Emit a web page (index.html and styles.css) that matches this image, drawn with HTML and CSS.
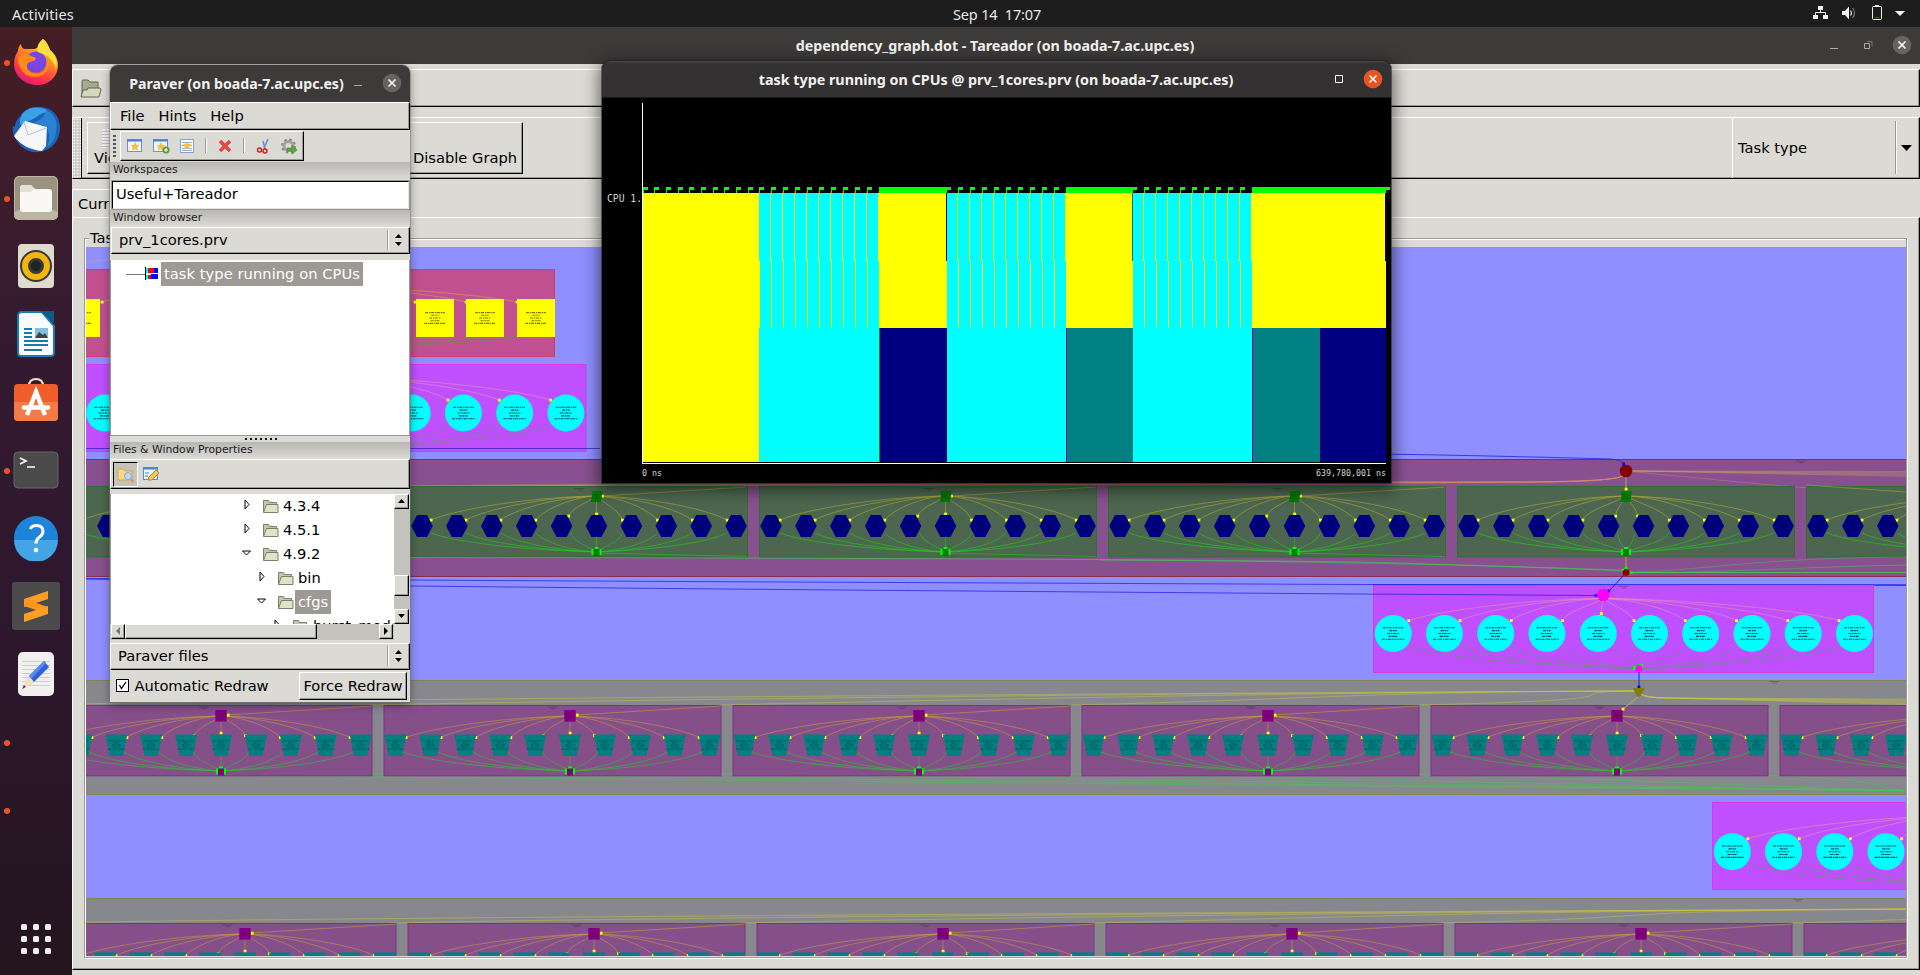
FILE: index.html
```html
<!DOCTYPE html>
<html lang="en">
<head>
<meta charset="utf-8">
<title>Desktop</title>
<link rel="stylesheet" href="styles.css">
</head>
<body>
<header class="topbar">
  <span class="activities">Activities</span>
  <span class="clock">Sep 14&nbsp; 17:07</span>
  <svg class="tray" width="110" height="27" viewBox="1810 0 110 27">
    <g fill="#f2f2f2"><rect x="1818" y="6" width="5" height="4"/><rect x="1813" y="15" width="5" height="4"/><rect x="1823" y="15" width="5" height="4"/></g>
    <path d="M1820.500 10V13M1815.500 15V12.500H1825.500V15" fill="none" stroke="#f2f2f2"/>
    <path d="M1842 11h3l4-4.500v13l-4-4.500h-3z" fill="#f2f2f2"/>
    <path d="M1850.500 10.500q2 2.500 0 5" fill="none" stroke="#ddd" stroke-width="1.200"/><path d="M1852.500 8q4 5 0 10" fill="none" stroke="#777" stroke-width="1.200"/>
    <rect x="1872.500" y="6.500" width="9" height="13" rx="1" fill="none" stroke="#f2f2f2"/><path d="M1875 5.500h4" stroke="#f2f2f2"/><path d="M1874 17.500h6" stroke="#c00"/>
    <path d="M1895 11h10l-5 5z" fill="#f2f2f2"/>
  </svg>
</header>
<div class="desktop">
  <nav class="dock">
    <div class="app running"><svg width="48" height="48" viewBox="0 0 48 48">
      <defs><linearGradient id="ff" x1="0.8" y1="0" x2="0.3" y2="1"><stop offset="0" stop-color="#fff44f"/><stop offset=".35" stop-color="#ff9a1f"/><stop offset=".7" stop-color="#ff4040"/><stop offset="1" stop-color="#e3157a"/></linearGradient><radialGradient id="fp"><stop offset="0" stop-color="#8a3ff0"/><stop offset="1" stop-color="#6a4bd8"/></radialGradient></defs>
      <path d="M31 1c4 3 6 8 7 11 5 4 8 9 8 15 0 12-9 20-21 20S2 38 2 26c0-6 2-10 4-13 0-3 1-5 3-7 0 3 2 5 4 5h9c2-1 4-1 5-2 0-3 2-6 4-8z" fill="url(#ff)"/>
      <circle cx="24" cy="24" r="10.500" fill="url(#fp)"/>
      <path d="M6 19c4-4 10-3 13-1l5 2c-1 4-6 3-8 5-3 4 0 9 5 10 8 2 14-3 14-10 0-3-1-5-2-6 5 3 5 11 0 16-6 6-17 5-22-1-3-5-6-10-5-15z" fill="#ff8c1a"/>
      <path d="M31 1c4 3 6 8 7 11 6 5 8 12 6 19-2-7-5-10-8-12-3-3-6-3-10-5-2-5 1-10 5-13z" fill="#ffdf3e"/></svg></div>
    <div class="app"><svg width="48" height="48" viewBox="0 0 48 48">
      <path d="M9 9C13 2 25-1 34 2c8 2 14 10 14 20 0 13-9 23-22 24-8 1-17-4-21-11C1 29 0 25 1 20l2 1c0-6 3-8 6-12z" fill="#1c62b8"/>
      <path d="M9 11c3-8 12-11 20-9 6 1 7 3 8 5-8-2-10 4-18 7-6 2-8 3-9 7-2-4-3-6-1-10z" fill="#3aa2e4"/>
      <path d="M34 4c9 4 12 12 10 22-1 8-5 13-9 15 3-7 3-13 0-19-3-4-9-4-13-5 6-3 11-6 12-13z" fill="#2a83d2"/>
      <path d="M13 15l22 6-1 19-4 5C18 44 7 38 2 30z" fill="#f4f6f8"/><path d="M12 16l4 13 18-7" fill="none" stroke="#b9c2ca"/></svg></div>
    <div class="app running"><svg width="46" height="46" viewBox="0 0 46 46"><rect x="1" y="1" width="44" height="44" rx="5" fill="#9b927f"/><rect x="1" y="35" width="44" height="10" rx="5" fill="#bdb5a4"/><rect x="1.500" y="1.500" width="43" height="43" rx="5" fill="none" stroke="#bdb6a6"/><path d="M7 13q0-3 3-3h8l4 4h14q3 0 3 3v17q0 3-3 3H10q-3 0-3-3z" fill="#f8f7f4"/><path d="M7 14q0-4 3-4h8l3 4-3 3H7z" fill="#e2dfd5"/></svg></div>
    <div class="app"><svg width="46" height="46" viewBox="0 0 46 46"><rect x="5" y="1" width="36" height="44" rx="4" fill="#dedacd"/><circle cx="23" cy="23" r="16" fill="#383838"/><circle cx="23" cy="23" r="11" fill="none" stroke="#f3b60c" stroke-width="6"/><circle cx="23" cy="23" r="5" fill="#222"/></svg></div>
    <div class="app"><svg width="46" height="46" viewBox="0 0 46 46"><path d="M9 1h20l12 14v27q0 3-3 3H8q-3 0-3-3V5q0-4 4-4z" fill="#f8fbfc" stroke="#147fb4" stroke-width="2"/><path d="M27 0h14v12z" fill="#0c5e87"/><g stroke="#1b78aa" stroke-width="2"><path d="M11 18h8M11 22h8M11 26h8M11 30h24M11 34h24M11 39h18"/></g><rect x="22" y="17" width="13" height="10" fill="#7fc1df"/><path d="M22 27l4-6 4 3 2-2 3 5z" fill="#444"/></svg></div>
    <div class="app lift"><svg width="46" height="46" viewBox="0 0 46 46"><path d="M16 9q0-7 7-7t7 7" fill="none" stroke="#f5dfb8" stroke-width="2"/><rect x="1" y="7" width="44" height="37" rx="4" fill="#f05e2b"/><path d="M1 25h44v15q0 4-4 4H5q-4 0-4-4z" fill="#f47a47"/><path d="M14 38l9-23 9 23" fill="none" stroke="#fff" stroke-width="4.500"/><path d="M11 30.500h24" stroke="#fff" stroke-width="4.500" stroke-linecap="round"/></svg></div>
    <div class="app running"><svg width="46" height="46" viewBox="0 0 46 46"><rect x="1" y="5" width="44" height="36" rx="4" fill="#4a4a4a" stroke="#666"/><path d="M7 11l6 3-6 3M14 20h8" fill="none" stroke="#fff" stroke-width="1.700"/></svg></div>
    <div class="app"><svg width="46" height="46" viewBox="0 0 46 46"><circle cx="23" cy="23" r="22" fill="#1e84d8"/><path d="M1 25a22 22 0 0 0 44 0z" fill="#43a5e6"/><path d="M17.500 14q1-3.500 6-3.500 6.500 0 6.500 6 0 3-4 6-3 2-3 6" fill="none" stroke="#fff" stroke-width="3"/><circle cx="23" cy="35" r="2.300" fill="#fff"/></svg></div>
    <div class="app"><svg width="48" height="48" viewBox="0 0 48 48"><rect width="48" height="48" rx="3" fill="#4b4b4b"/><path d="M12 17l24-8v8l-24 8z" fill="#ff9e22"/><path d="M12 17l24 8v7l-24-8z" fill="#ff9519"/><path d="M12 32l24-8v8l-24 8z" fill="#ff9e22"/></svg></div>
    <div class="app"><svg width="46" height="46" viewBox="0 0 46 46"><rect x="5" y="1" width="36" height="44" rx="5" fill="#f1f0ef"/><g stroke="#cfcfcf"><path d="M9 10.500h28M9 14.500h28M9 18.500h28M9 22.500h28M9 26.500h28M9 30.500h28M9 34.500h28"/></g><path d="M16 25L31 10l5 6-15 15z" fill="#2f62d9"/><path d="M16 25L31 10l2 2-15 16z" fill="#5c8af0"/><path d="M15 26l6 6-12 6z" fill="#f8dcc0"/><path d="M9 38l2-4 2 2z" fill="#444"/></svg></div>
    <div class="app running"></div>
    <div class="app running"></div>
    <div class="launcher"><i></i><i></i><i></i><i></i><i></i><i></i><i></i><i></i><i></i></div>
  </nav>
  <main class="tareador">
    <div class="titlebar main-title"><span>dependency_graph.dot - Tareador (on boada-7.ac.upc.es)</span>
      <svg class="main-buttons" width="100" height="37" viewBox="1820 27 100 37"><path d="M1830 48.500h8" stroke="#aaa"/><path d="M1864.500 43.500h5v5h-5z" fill="none" stroke="#aaa"/><path d="M1867 41.500h5v5" fill="none" stroke="#777"/><circle cx="1902" cy="45" r="9.300" fill="#656463"/><path d="M1898.500 41.500l7 7m0-7l-7 7" stroke="#fff" stroke-width="1.600"/></svg>
    </div>
    <div class="bar open-bar"><svg class="folder" width="22" height="20" viewBox="0 0 22 20"><path d="M2 17V2q0-1 1-1h5l2 2h8v6" fill="#a5ab8c" stroke="#62664f"/><path d="M1 18l2-7h4l1-2h12l1 1-2 8z" fill="#d4d8bd" stroke="#62664f"/></svg></div>
    <div class="bar tool-bar">
      <div class="grip"></div>
      <div class="view-button"><span class="view-icon"></span><span class="view-label">View</span><span class="disable-label">Disable Graph</span></div>
      <div class="task-combo"><span>Task type</span><i class="sep"></i><svg width="12" height="6" viewBox="0 0 12 6"><path d="M0 0h11L5.500 6z"/></svg></div>
    </div>
    <div class="tab">Current</div>
    <div class="page">
      <div class="group"><span class="group-label">Task</span><svg id="graph" class="graph" width="1820" height="709" viewBox="86 247 1820 709"></svg></div>
    </div>
    <div class="status"></div>
  </main>
</div>

<section class="window paraver">
  <div class="titlebar"><span>Paraver (on boada-7.ac.upc.es)</span>
    <svg class="title-buttons" width="60" height="37" viewBox="350 65 60 37"><path d="M354 85.500h8" stroke="#aaa"/><circle cx="392" cy="83" r="9.300" fill="#656463"/><path d="M388.500 79.500l7 7m0-7l-7 7" stroke="#fff" stroke-width="1.600"/></svg></div>
  <div class="menu"><span>File</span><span>Hints</span><span>Help</span></div>
  <div class="icons-row"><div class="dots"></div><div class="icon-bar">
    <svg width="181" height="26" viewBox="121 133 181 26">
      <g id="star-window"><rect x="127.500" y="139.500" width="14" height="12" fill="#eef4fb" stroke="#6c93cb"/><path d="M127 140.500h15" stroke="#4a80d0" stroke-width="2"/><path d="M135 142l1.500 3 3 .3-2.200 2 .7 3.200-3-1.600-3 1.600.7-3.200-2.200-2 3-.3z" fill="#f5c03a"/></g>
      <use href="#star-window" x="26"/><circle cx="166" cy="150" r="3.500" fill="#5f9638"/><path d="M164 150h4m-2-2v4" stroke="#fff"/>
      <rect x="180.500" y="139.500" width="13" height="13" fill="#fff" stroke="#7fa3d2"/><path d="M182 142.500h10M182 145.500h10M182 148.500h10M182 150.500h10" stroke="#8fb0d8"/><path d="M187 141l1.500 3 3 .3-2.200 2 .7 3.200-3-1.600-3 1.600.7-3.200-2.200-2 3-.3z" fill="#f5c03a"/>
      <path d="M205.500 138v15M243.500 138v15" stroke="#999"/><path d="M206.500 138v15M244.500 138v15" stroke="#fff"/>
      <path d="M220 141l10 10m0-10l-10 10" stroke="#e04848" stroke-width="3.600"/>
      <path d="M268 139l-4 9M263 141l2 8" stroke="#5b93c9" stroke-width="1.500"/><circle cx="259.500" cy="150" r="2" fill="none" stroke="#c22" stroke-width="1.500"/><circle cx="265" cy="151" r="2" fill="none" stroke="#c22" stroke-width="1.500"/>
      <circle cx="288.500" cy="146" r="4.500" fill="none" stroke="#a3a39e" stroke-width="3"/><circle cx="288.500" cy="146" r="6.500" fill="none" stroke="#8b8b86" stroke-width="2" stroke-dasharray="2.500 2.600"/><path d="M287 148h5v-3l5 5-5 4v-3h-5z" fill="#62a83c" stroke="#3c7a22" stroke-width=".6"/>
    </svg></div></div>
  <div class="strip">Workspaces</div>
  <div class="input">Useful+Tareador</div>
  <div class="strip strip-b">Window browser</div>
  <div class="combo"><span>prv_1cores.prv</span><i></i><svg width="7" height="14" viewBox="0 0 7 14"><path d="M0 5h7L3.500 1zM0 9h7l-3.500 4z"/></svg></div>
  <div class="tree"><span class="branch"></span><svg width="13" height="13" viewBox="0 0 13 13"><path d="M0 0h1v13H0z"/><path d="M1 1h2v5H1zM1 8h2v4H1z" fill="#0ff"/><path d="M3 1h6v5H3zM3 8h3v4H3z" fill="red"/><path d="M9 1h4v5H9zM6 7h7v5H6z" fill="#00f"/></svg><span class="selected">task type running on CPUs</span></div>
  <div class="sash"></div>
  <div class="strip strip-b">Files &amp; Window Properties</div>
  <div class="tab-icons">
    <span class="pressed"><svg width="18" height="16" viewBox="0 0 18 16"><path d="M1 13V2h5l2 2h7v9z" fill="#f8d98a" stroke="#d8a53c"/><circle cx="11" cy="9" r="3.500" fill="#bcdcf5" stroke="#7fa9d6"/><path d="M13.500 12l3 3" stroke="#c99a5e" stroke-width="2"/></svg></span>
    <svg width="18" height="16" viewBox="0 0 18 16"><rect x="1.500" y="1.500" width="14" height="12" fill="#edf3fb" stroke="#5a8ad0"/><path d="M1 2.500h15" stroke="#4a80d0" stroke-width="2"/><path d="M3 7h4M3 10h3" stroke="#4a80d0"/><path d="M6 14l1-3 7-7 3 3-7 7z" fill="#f3c65a" stroke="#bb8526"/></svg>
  </div>
  <div class="files">
    <div class="file-main">
      <ul class="file-list">
        <li class="lvl1 closed">4.3.4</li><li class="lvl1 closed">4.5.1</li><li class="lvl1 open">4.9.2</li><li class="lvl2 closed">bin</li><li class="lvl2 open"><b>cfgs</b></li><li class="lvl3 closed">burst_mode</li>
      </ul>
      <div class="hscroll"><span class="btn dim"><svg width="12" height="12" viewBox="0 0 12 12"><path d="M8 2v8L4 6z" fill="#777"/></svg></span><span class="thumb"></span><span class="trough"></span><span class="btn"><svg width="12" height="12" viewBox="0 0 12 12"><path d="M4 2v8l4-4z"/></svg></span></div>
    </div>
    <div class="vscroll"><span class="btn"><svg width="13" height="12" viewBox="0 0 13 12"><path d="M3 8h7L6.500 4z"/></svg></span><span class="trough"></span><span class="thumb"></span><span class="gap"></span><span class="btn"><svg width="13" height="12" viewBox="0 0 13 12"><path d="M3 4h7L6.500 8z"/></svg></span></div>
  </div>
  <div class="combo combo-b"><span>Paraver files</span><i></i><svg width="7" height="14" viewBox="0 0 7 14"><path d="M0 5h7L3.500 1zM0 9h7l-3.500 4z"/></svg></div>
  <div class="redraw"><span class="check"><svg width="11" height="11" viewBox="0 0 11 11"><path d="M2.500 5l2 3.500L9 2" fill="none" stroke="#000" stroke-width="1.300"/></svg></span><span class="auto">Automatic Redraw</span><span class="force">Force Redraw</span></div>
</section>

<section class="window timeline">
  <div class="titlebar"><span>task type running on CPUs @ prv_1cores.prv (on boada-7.ac.upc.es)</span>
    <svg class="title-buttons" width="80" height="36" viewBox="1311 61 80 36"><path d="M1335.500 75.500h7v7h-7z" fill="none" stroke="#fff"/><circle cx="1373" cy="79" r="9.300" fill="#e95420"/><path d="M1369.500 75.500l7 7m0-7l-7 7" stroke="#fff" stroke-width="1.600"/></svg></div>
  <svg id="trace" width="789" height="385" viewBox="602 98 789 385"></svg>
</section>
<script src="app.js"></script>
</body>
</html>
```

FILE: styles.css
```css
* { box-sizing: border-box; }
body { margin: 0; width: 1920px; height: 975px; overflow: hidden; background: #dbdad5; color: #000; font: 14.67px "DejaVu Sans", sans-serif; }
svg { display: block; flex: none; }

.topbar { height: 27px; background: #1d1d1d; color: #e8e8e8; display: grid; grid-template-columns: 1fr auto 1fr; align-items: center; font: 14.5px "Noto Sans", sans-serif; line-height: 26px; }
.activities { padding-left: 12px; letter-spacing: .15px; }
.clock { width: 88px; margin-right: -74px; position: relative; white-space: nowrap; letter-spacing: -.15px; }
.tray { justify-self: end; }

.desktop { display: flex; height: 948px; }
.dock { width: 72px; flex: none; padding-top: 1px; background: linear-gradient(#451e24, #351a31 32%, #2c172d 65%, #24151e); }
.app { height: 68px; display: flex; align-items: center; justify-content: center; position: relative; }
.app.lift { padding-bottom: 4px; }
.running::before { content: ""; position: absolute; left: 4px; top: 32px; width: 6px; height: 6px; border-radius: 50%; background: #e95420; }
.launcher { display: grid; grid-template-columns: repeat(3, 6px); gap: 6px; margin: 80px 0 0 21px; }
.launcher i { width: 6px; height: 6px; border-radius: 1.500px; background: #f0f0f0; }

.titlebar { display: flex; align-items: center; justify-content: center; position: relative; color: #f2f1f0; font: bold 14.25px "Noto Sans", sans-serif; white-space: nowrap; }
.tareador { flex: 1; min-width: 0; display: flex; flex-direction: column; }
.main-title { height: 37px; background: #3d3b3a; padding: 0 2px 1px 0; }
.main-buttons, .title-buttons { position: absolute; right: 0; top: 0; }
.bar { border: 1px solid; border-color: #fff #000 #000 #fff; box-shadow: inset -1px -1px #9b9994; }
.open-bar { margin-top: 5px; height: 38px; padding: 9px 7px; }
.tool-bar { margin-top: 10px; height: 62px; display: flex; }
.grip { width: 9px; margin-right: 5px; border-right: 1px solid #000; background: radial-gradient(#fff 40%, #c9c8c3 50%) 0 0/3px 3px; }
.view-button { width: 436px; height: 52px; margin-top: 4px; border: 1px solid; border-color: #fff #000 #000 #fff; box-shadow: inset -1px -1px #9b9994; display: grid; grid-template-columns: 325px auto; grid-template-rows: 25px 24px; justify-content: start; line-height: 20px; }
.view-icon { width: 20px; height: 19px; margin: 6px 0 0 14px; background: repeating-linear-gradient(#eee 0 2px, #c4c4c4 2px 3px); grid-column: 1 / 3; }
.view-label { padding-left: 6px; }
.task-combo { margin-left: auto; width: 187px; height: 60px; border-left: 1px solid #fff; display: flex; align-items: center; padding: 0 6px 1px 5px; }
.task-combo .sep { margin: 0 4px 0 auto; width: 2px; height: 53px; background: linear-gradient(90deg, #9b9994 50%, #fff 50%); }
.tab { margin: 10px 0 0; width: 90px; height: 28px; padding: 5px 0 0 5px; border: solid #fff; border-width: 1px 0 0 1px; }
.page { height: 753px; border: 1px solid; border-color: #fff #000 #000 #fff; box-shadow: inset -1px -1px #9b9994; padding: 20px 12px 0 11px; }
.group { width: 1823px; height: 720px; border: 1px solid #9b9994; box-shadow: inset 1px 1px #fff, 1px 1px #fff; padding: 8px 0 0 1px; }
.group-label { float: left; margin: -18px 0 0 3px; padding: 0 1px; background: #dbdad5; line-height: 18px; }

.window { position: absolute; overflow: hidden; }
.paraver { left: 110px; top: 65px; width: 300px; height: 637px; background: #dbdad5; border-radius: 8px 8px 0 0; box-shadow: 0 0 0 1px #77777780, 0 3px 10px #0006; display: flex; flex-direction: column; }
.paraver > * { flex: none; }
.paraver .titlebar { height: 37px; background: #3d3b3a; padding-right: 47px; font-size: 14.15px; }
.menu { height: 28px; border: 1px solid; border-color: #fff #000 #000 #fff; box-shadow: inset -1px -1px #9b9994; display: flex; gap: 14px; padding: 4px 0 0 9px; }
.icons-row { height: 32px; display: flex; padding: 1px 0 1px 3px; }
.dots { width: 3px; height: 24px; margin: 4px 4px 0 0; background: repeating-linear-gradient(#555 0 2px, transparent 2px 4px); }
.icon-bar { width: 184px; height: 30px; padding-top: 1px; border: 1px solid; border-color: #fff #000 #000 #fff; box-shadow: inset -1px -1px #9b9994; }
.strip { height: 18px; padding-left: 3px; background: linear-gradient(#b8b7b4, #dbdad5); font-size: 10.8px; line-height: 16px; color: #1a1a1a; }
.strip-b { height: 17px; }
.input { height: 30px; margin-left: 1px; background: #fff; border: 2px solid; border-color: #000 #e4e4e0 #e4e4e0 #000; outline: 1px solid #9b9994; outline-offset: -1px; padding: 2px 0 0 3px; line-height: 20px; }
.combo { height: 27px; margin-left: 1px; border: 1px solid; border-color: #fff #000 #000 #fff; box-shadow: inset -1px -1px #9b9994; display: flex; align-items: center; padding: 0 7px 2px 7px; }
.combo i { margin: 0 6px 0 auto; width: 2px; height: 20px; background: linear-gradient(90deg, #9b9994 50%, #fff 50%); }
.combo-b { margin: 3px 0 0; }
.tree { height: 176px; margin-top: 6px; background: #fff; border: solid #9b9994; border-width: 0 1px 1px; display: flex; align-items: flex-start; padding: 2px 0 0 15px; }
.tree .branch { width: 19px; border-top: 1px solid #777; margin-top: 12px; }
.tree svg { margin: 5px 3px 0 0; }
.selected { background: #9c9a93; color: #fff; height: 24px; line-height: 23px; padding: 0 3px; white-space: nowrap; letter-spacing: .06px; }
.sash { width: 33px; height: 2px; margin: 2px 0 2px 135px; background: repeating-linear-gradient(90deg, #111 0 2px, transparent 2px 5px); }
.tab-icons { height: 30px; border: 1px solid; border-color: #fff #000 #000 #fff; box-shadow: inset -1px -1px #9b9994; display: flex; align-items: center; gap: 4px; padding-left: 2px; }
.pressed { width: 25px; height: 25px; background: #c3c2bd; border: 1px solid; border-color: #000 #fff #fff #000; padding: 4px 3px; }
.files { height: 146px; margin-top: 5px; display: flex; }
.file-main { width: 284px; }
.file-list { height: 130px; overflow: hidden; margin: 0; padding: 0; list-style: none; background: #fff; border-left: 1px solid #9b9994; }
.file-list li { height: 24px; line-height: 24px; white-space: nowrap; padding-left: 172px; position: relative; }
.file-list .lvl2 { padding-left: 187px; }
.file-list .lvl3 { padding-left: 202px; }
.file-list b { display: inline-block; margin-left: -3px; padding: 0 3px; font-weight: normal; background: #9c9a93; color: #fff; }
.file-list svg { position: absolute; top: 3px; }
.hscroll { height: 16px; display: flex; padding-left: 1px; background: #c3c2bd; }
.vscroll { width: 16px; height: 130px; display: flex; flex-direction: column; }
.btn, .thumb { background: #dbdad5; border: 1px solid; border-color: #fff #000 #000 #fff; box-shadow: inset -1px -1px #9b9994; }
.btn { width: 14px; height: 15px; flex: none; }
.vscroll .btn { width: 15px; }
.hscroll .thumb { width: 192px; height: 15px; }
.hscroll .trough { width: 62px; }
.vscroll .trough { height: 66px; background: #c3c2bd; }
.vscroll .thumb { height: 21px; width: 15px; }
.vscroll .gap { height: 13px; background: #c3c2bd; }
.redraw { display: flex; align-items: center; height: 32px; padding: 0 3px 1px 6px; }
.check { width: 13px; height: 13px; border: 1px solid #000; background: #fff; }
.auto { margin-left: 5.500px; letter-spacing: -.04px; }
.force { margin-left: auto; width: 108px; height: 28px; line-height: 25px; text-align: center; border: 1px solid; border-color: #fff #000 #000 #fff; box-shadow: inset -1px -1px #9b9994; white-space: nowrap; }

.timeline { left: 602px; top: 61px; width: 789px; height: 422px; background: #000; border-radius: 8px 8px 0 0; box-shadow: 0 0 0 1px #2228, 0 4px 16px 3px #0008; }
.timeline .titlebar { height: 37px; background: linear-gradient(#454345 1px, #333132 2px); border-bottom: 1px solid #1c1b1b; font-size: 14.32px; padding-right: 1px; }
.timeline text { font-family: "DejaVu Sans Mono", monospace; fill: #d6d6d6; }
```

FILE: app.js
```js
// Disclosure arrows and folders of the file tree
document.querySelectorAll('.file-list li').forEach(li => {
  const left = li.classList.contains('lvl1') ? 131 : li.classList.contains('lvl2') ? 146 : 161;
  const arrow = li.classList.contains('open') ? 'M0.500 6h8l-4 4z' : 'M3 3l4 4.500-4 4.500z';
  li.insertAdjacentHTML('afterbegin', `<svg style="left:${left}px" width="40" height="18" viewBox="0 0 40 18"><path d="${arrow}" fill="#fff" stroke="#000"/><path d="M21.500 15.500V3.500h5l1 2h7v2" fill="#c2c8a8" stroke="#7c8068"/><path d="M21.500 15.500l3-8h11.500v8z" fill="#dfe3ca" stroke="#7c8068"/></svg>`);
});

// Dependency graph
const out = [];
const rect = (x, y, w, h, f, s) => out.push(`<rect x="${x}" y="${y}" width="${w}" height="${h}" fill="${f}"${s ? ` stroke="${s}"` : ''}/>`);
const line = (d, s, o = 0.5, w = 1) => out.push(`<path d="${d}" fill="none" stroke="${s}" stroke-opacity="${o}" stroke-width="${w}"/>`);
const tip = (x, y, c) => rect(x - 1.3, y - 1.3, 2.8, 2.8, c);
const poly = (p, f) => out.push(`<polygon points="${p}" fill="${f}"/>`);
const circle = (x, y, r, f) => out.push(`<circle cx="${x}" cy="${y}" r="${r}" fill="${f}"/>`);
const label = (x, y, k = 1, c = '#012', o = 0.75) => [22, 8, 13, 10, 24].forEach((w, i) =>
  out.push(`<path d="M${x - w * k / 2} ${y + (i - 2) * 3 * k}h${w * k}" stroke="${c}" stroke-opacity="${o}" stroke-width="${Math.min(1.1, 1.3 * k)}" stroke-dasharray="3 .8 1.500 .6"/>`));
const caption = (x, y) => { line(`M${x - 5} ${y}h10`, '#222', .3); line(`M${x - 2} ${y + 1.5}h5`, '#222', .3); };

function fanOut(nx, ny, pts, color, op) {
  pts.forEach(([tx, ty]) => {
    const d = tx - nx;
    line(`M${nx} ${ny}C${nx + d * 0.4} ${ny + (Math.abs(d) > 50 ? 1 : (ty - ny) * 0.4)} ${nx + d * 0.85} ${ny + (ty - ny) * 0.55} ${tx} ${ty}`, color, op);
    tip(tx, ty, '#ff0');
  });
}
function fanIn(nx, ny, pts, color, op) {
  pts.forEach(([tx, ty]) => {
    const d = tx - nx;
    line(`M${tx} ${ty}C${nx + d * 0.85} ${ty + (ny - ty) * 0.5} ${nx + d * 0.45} ${ny - (Math.abs(d) > 50 ? 2 : (ny - ty) * 0.4)} ${nx} ${ny}`, color, op);
  });
}
function goal(x, y, c) {
  rect(x - 5, y - 3, 10, 6, '#0f0');
  rect(x - 2, y - 5, 4, 3, '#0f0');
  rect(x - 3, y - 3, 6, 7, c);
}

rect(86, 247, 1820, 709, '#8f8fff');

// Yellow-task cluster
rect(60, 269.5, 494.5, 87, '#c0508f', '#d23a70');
line('M86 263Q100 260 115 259', '#aaa', .6);
for (const x of [102, 415, 466, 517]) fanOut(260, 284, [[x, 302]], '#d8a050', .6);
for (const x of [102, 445, 495, 540]) fanIn(260, 350, [[x, 334]], '#5a9a50', .6);
for (const x of [62, 416, 466, 517]) { rect(x, 299, 38, 38, '#ff0'); label(x + 19, 318, .9, '#330', .65); }

// Round-task clusters
function roundCluster(x, y, w, cy, cx, n, top, bot) {
  rect(x, y, w, 87, '#c050ff', '#d838ee');
  const cs = [...Array(n)].map((_, i) => cx + 51.25 * i);
  fanOut(top, y + 13, cs.map(c => [c + (c < top - 20 ? 15.5 : Math.abs(c - top) < 20 ? 3 : -15.5), cy - (Math.abs(c - top) < 20 ? 20 : 13)]), '#e8a0a0', .5);
  fanIn(bot, y + 83, cs.map(c => [c + (c < bot - 20 ? 15 : -15), cy + 13]), '#5a9a70', .6);
  cs.forEach(c => { circle(c, cy, 18.5, '#0ff'); label(c, cy, .95); });
}
roundCluster(60, 364.5, 526, 413, 104.7, 10, 340, 340);
line('M86 448.500H600', '#2020d0', .7);

// Maroon band with green groups
rect(60, 459.5, 1900, 117, '#88508f', '#8b2c4c');
line('M1380 454C1450 455 1540 457 1610 459Q1622 460 1624 464', '#2222e0', .8);
for (let k = 0; k < 9; k++) {
  line(`M1623 476C1600 485 1500 481 ${1400 - k * 60} ${484 - k * .3}L${600 - k * 30} 486`, '#d09060', .3);
  if (k < 5) line(`M1632 471L1906 ${471.5 + k * 1.2}`, '#c8a060', .4);
}
line('M1636 472L1760 484 1906 496', '#d09060', .4);
for (let b = 0; b < 6; b++) {
  const x = 61.5 + 349 * b, special = b === 4, nx = special ? 1626 : x + 186;
  rect(x, 486.5, 337, 70.5, '#4d664f', '#2c7038');
  const hs = [...Array(10)].map((_, i) => x + 11.5 + 34.9 * i);
  fanOut(nx, 496, hs.map((h, i) => [h + (i < 5 ? (i === 4 ? 7 : 9) : !special && i === 5 ? 0 : (special && i === 5 ? -6 : -9)), !special && i === 5 ? 514 : (i === 4 || (special && i === 5) ? 516 : 520)]), '#a5a535', .65);
  fanIn(nx, 552, hs.map((h, i) => [h + (i < 5 ? 9 : !special && i === 5 ? 0 : -9), 533]), '#1ec81e', .65);
  if (!special) {
    line(b < 4 ? `M${nx + 6} 496L${nx + 150} 487` : `M1906 492L1806 485`, '#a5a535', .6);
    tip(nx + 6, 496, '#ff0');
    line(`M${nx} 553L${nx + 150} 556.5`, '#1ec81e', .6);
    caption(nx - 17, 488.5);
  }
  hs.forEach(h => { poly(`${h - 10.8},526 ${h - 5},515 ${h + 5},515 ${h + 10.8},526 ${h + 5},537 ${h - 5},537`, '#000083'); label(h, 526, .6, '#000048', .7); });
  poly(`${nx - 4},491 ${nx + 6},491 ${nx + 4.5},502 ${nx - 5.5},502`, '#007a00');
  label(nx, 496.5, .3, '#030', .6);
  goal(nx, 552, '#007a00');
}
line('M410 557.500C900 558 1300 560 1400 563L1622 570', '#40d050', .6);
line('M1100 560C1300 561 1500 565 1622 571', '#40d050', .6);
line('M1632 572.500C1720 573 1800 567 1906 565', '#40d050', .5);
line('M1632 572.500H1906', '#40d050', .8);
line('M1632 572C1700 571 1750 558 1906 557', '#40d050', .4);
line('M1626 477V488M1626 557V568', '#c0c040', .8); tip(1626, 489, '#ff0'); tip(1626, 568, '#0f0'); tip(1623, 570, '#0f0'); tip(1631, 572.5, '#0f0');
circle(1626, 471, 6.3, '#840000'); circle(1626, 572.5, 3.3, '#840000');

// Blue dependencies and centre cluster
line('M86 578.500H200C500 581 900 582.500 1360 584.500L1906 585.500', '#2222e0', .75);
roundCluster(1373.5, 585.5, 500, 633.5, 1393.2, 10, 1603.2, 1639);
line('M1373 584.500H1906', '#2222e0', .7);
line('M86 579L410 586C800 590 1100 592 1360 594L1596 595.500', '#2222e0', .75);
line('M1624 575L1609 591', '#1010e0', .9); tip(1608.5, 591, '#00f'); tip(1596, 595.500, '#00f'); tip(1623.500, 464, '#00f');
circle(1603.2, 595, 6.300, '#f0f');
rect(1633, 666, 4, 4, '#0f0'); rect(1639, 664, 4, 4, '#0f0'); circle(1639, 668.5, 3.3, '#f0f');

// Grey bands with purple groups
function greyBand(y, h, x0, nTop, fanned) {
  rect(60, y + .5, 1900, h, '#87888e', '#878250');
  for (let b = -1; b < 5; b++) {
    const r = x0 + 349 * b + 337, edge = nTop - 5;
    if (fanned) {
      if (b < 4) line(`M${r} ${edge}C${r + 260} ${edge - 6} ${Math.max(1350, r + 120)} 692 1634 691`, '#c8c440', .5);
      line(`M1641 694Q1645 698 1670 698L1906 ${699 + (b + 1) * 1.1}`, '#c8c440', .45);
      line(`M${r - 150} 772C${r + 150} ${775 + b * .3} ${r + (1906 - r) * .6} 785 1906 790.5`, '#40cc50', .5);
    } else {
      line(`M${r} ${edge}C${r + 260} ${edge - 6} ${Math.max(1500, r + 120)} 911 1930 909`, '#c8c440', .5);
    }
  }
  for (let b = 0; b < 6; b++) {
    const x = x0 + 349 * b - .5, nx = x + 186;
    rect(x, nTop - 4.5, 337, 70.3, '#854f8a', '#81308a');
    const ts = [...Array(10)].map((_, i) => x + 11.5 + 34.9 * i);
    fanOut(nx, nTop + 6, ts.map((t, i) => [t + (i < 5 ? (i === 4 ? 8 : 10.500) : i === 5 ? 0 : -10.5), nTop + (i === 5 ? 23 : i === 4 || i === 6 ? 25.5 : 27.5)]), '#c49445', .6);
    fanIn(nx, nTop + 61, ts.map((t, i) => [t + (i < 5 ? 7.5 : i === 5 ? 0 : -7.5), nTop + 42]), '#38b438', .7);
    if (!(fanned && b === 4)) { line(`M${nx + 6} ${nTop + 5}L${nx + 151} ${nTop - 4}`, '#b89348', .7); tip(nx + 7, nTop + 5, '#ff0'); }
    ts.forEach(t => { poly(`${t - 11},${nTop + 24.500} ${t + 11},${nTop + 24.500} ${t + 6.5},${nTop + 46} ${t - 6.5},${nTop + 46}`, '#008080'); label(t, nTop + 35, .7, '#003b3b', .65); });
    rect(nx - 5.7, nTop, 11.4, 11.600, '#800080'); label(nx, nTop + 6, .3, '#400040', .6);
    goal(nx, nTop + 61.500, '#800080');
    caption(nx - 17.500, nTop - 3);
  }
}
greyBand(680, 114, 35.5, 710, true);
greyBand(898, 80, 59.5, 928, false);
line('M1639 672V687', '#1010e0', .9); tip(1638.8, 687, '#00f');
poly('1633,688 1645,688 1640,696.500 1637,696.500', '#808000');
line('M1638 697L1623 709', '#c0c040', .8); tip(1623, 709, '#ff0');
[[1801, 461], [1774.500, 681.5], [1798, 899.5], [1623.500, 586.500]].forEach(([x, y]) => caption(x, y));
roundCluster(1712.5, 802.5, 500, 851.7, 1732.3, 5, 1960, 1980);
document.getElementById('graph').innerHTML = out.join('');

// Execution trace
const tr = [];
const bar = (x0, x1, y0, y1, c) => tr.push(`<rect x="${x0}" y="${y0}" width="${x1 - x0}" height="${y1 - y0}" fill="${c}"/>`);
const Y = '#ff0', C = '#0ff', N = '#000080', T = '#008080', P = '#800080', G = '#0f0';
bar(643, 1385, 193, 261, Y); bar(643, 1386, 261, 328, Y);
[[759, 878], [947, 1065], [1133, 1251]].forEach(([a, b], k) => {
  bar(a, b, 193, 261, C); bar(k ? a : a + 1, b + 1, 261, 328, C);
  const s = [770, 957, 1143][k];
  for (let i = 0; i < 9; i++) { bar(s + 12 * i, s + 1 + 12 * i, 193, 261, Y); bar(s + 1 + 12 * i, s + 2 + 12 * i, 261, 328, Y); }
});
bar(946, 947, 193, 261, N); bar(1132, 1133, 193, 261, T); bar(1385, 1386, 193, 261, N);
[[643, 759, Y], [759, 879, C], [879, 880, '#008000'], [880, 947, N], [947, 1066, C], [1066, 1067, P], [1067, 1133, T], [1133, 1252, C], [1252, 1253, P], [1253, 1320, T], [1320, 1386, N]].forEach(([a, b, c]) => bar(a, b, 328, 462, c));
const flags = [643, 654, 666, 678, 689, 701, 713, 724, 736, 748, 759];
for (const s of [771, 958, 1144]) for (let i = 0; i < 9; i++) flags.push(s + 12 * i);
flags.forEach(f => { bar(f, f + 1, 187, 193, G); bar(f, f + 5, 187, 190, G); });
[[879, 947], [1066, 1133], [1252, 1386]].forEach(([a, b]) => { bar(a, b, 187, 193, G); bar(b, b + 4, 187, 190, G); });
bar(642, 643, 103, 464, '#fff'); bar(642, 1386, 463, 464, '#fff');
tr.push('<text x="607" y="202" font-size="9.700">CPU 1.</text><text x="642" y="476" font-size="8.300">0 ns</text><text x="1386" y="476" font-size="8.300" text-anchor="end">639,780,001 ns</text>');
document.getElementById('trace').innerHTML = tr.join('');
```
